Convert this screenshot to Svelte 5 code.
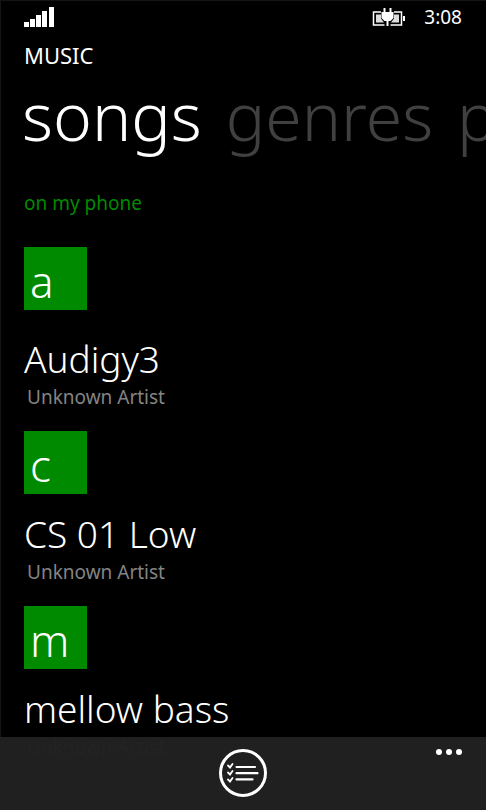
<script lang="ts">
  type Song = { title: string; artist: string };
  type Group = { letter: string; songs: Song[] };

  const pivots = ['songs', 'genres', 'playlists'];
  let active = $state('songs');

  const groups: Group[] = [
    { letter: 'a', songs: [{ title: 'Audigy3', artist: 'Unknown Artist' }] },
    { letter: 'c', songs: [{ title: 'CS 01 Low', artist: 'Unknown Artist' }] },
    { letter: 'm', songs: [{ title: 'mellow bass', artist: 'Unknown Artist' }] },
  ];
</script>

<div class="phone">
  <header class="status">
    <svg class="signal" width="30" height="20" viewBox="0 0 30 20" aria-label="Signal strength">
      <path fill="#fff" d="M0 15h5v5H0zM6 12h5v8H6zM12 8h5v12h-5zM18 4h5v16h-5zM25 0h5v20h-5z" />
    </svg>
    <svg class="battery" width="34" height="20" viewBox="0 0 34 20" aria-label="Charging">
      <path fill="none" stroke="#fff" stroke-width="1.5" d="M9 5H1.500v13h11M22 5h7.500v13h-11" />
      <path fill="#ddd" d="M4 7.500h5v4l3 4H4zM27 7.500h-5v4l-3 4h8z" />
      <path fill="#fff" d="M31 9h2v5h-2zM11.500 1h2v4h4V1h2v4h2v6l-3 3h-2v5h-2v-5h-2l-3-3V5h2z" />
    </svg>
    <time>3:08</time>
  </header>

  <h1>MUSIC</h1>

  <nav class="pivots">
    {#each pivots as pivot}
      <button class:active={pivot === active} onclick={() => (active = pivot)}>{pivot}</button>
    {/each}
  </nav>

  <main>
    <a class="filter" href="#phone">on my phone</a>

    {#each groups as group}
      <section>
        <button class="letter">{group.letter}</button>
        {#each group.songs as song}
          <div class="song">
            <h2>{song.title}</h2>
            <p>{song.artist}</p>
          </div>
        {/each}
      </section>
    {/each}
  </main>

  <footer class="appbar">
    <button class="select" aria-label="select">
      <svg width="48" height="48" viewBox="0 0 48 48" fill="none" stroke="#fff" stroke-linecap="round">
        <circle cx="24" cy="24" r="22.5" stroke-width="3" />
        <path stroke-width="2.2" d="M17.500 18h18.500M17.500 24.200h21M17.500 30.400h16" />
        <path stroke-width="1.8" d="M9 16.500l2 2 2.500-3.500M9 23.500l2 2 2.500-3.500M9 30.500l2 2 2.500-3.500" />
      </svg>
    </button>
    <button class="more" aria-label="more">
      <svg width="26" height="6" viewBox="0 0 26 6" fill="#fff">
        <circle cx="3" cy="3" r="3" />
        <circle cx="13" cy="3" r="3" />
        <circle cx="23" cy="3" r="3" />
      </svg>
    </button>
  </footer>
</div>

<style>
  :global(body) {
    margin: 0;
    background: #000;
  }

  .phone {
    box-sizing: border-box;
    height: 100vh;
    overflow: hidden;
    border-top: 1px solid #141414;
    border-left: 1px solid #141414;
    background: #000;
    color: #fff;
    font-family: "Noto Sans", "Open Sans", sans-serif;
    font-weight: 300;
  }

  button {
    padding: 0;
    border: 0;
    background: none;
    color: inherit;
    font: inherit;
    cursor: pointer;
  }

  svg {
    display: block;
  }

  .status {
    display: flex;
    align-items: center;
    height: 32px;
    padding: 0 24px 0 23px;
  }

  .battery {
    margin-left: auto;
  }

  time {
    margin-left: 18px;
    font-size: 19px;
    font-weight: 400;
  }

  h1 {
    margin: 8px 23px 0;
    font-size: 22px;
    line-height: 28px;
    font-weight: 400;
  }

  .pivots {
    display: flex;
    gap: 24px;
    padding-left: 21px;
    margin-top: 2px;
    overflow: hidden;
    font-size: 66px;
    line-height: 88px;
  }

  .pivots button {
    color: #404040;
  }

  .pivots .active {
    color: #fff;
  }

  main {
    padding: 30px 23px 0;
  }

  .filter {
    display: block;
    margin-bottom: 30px;
    color: #008a00;
    font-size: 19px;
    line-height: 28px;
    font-weight: 400;
    text-decoration: none;
  }

  section {
    margin-bottom: 22px;
  }

  .letter {
    display: block;
    width: 63px;
    height: 63px;
    padding: 6px 0 1px 6px;
    background: #008a00;
    font-size: 44px;
    line-height: 56px;
    text-align: left;
  }

  .song {
    margin-top: 14px;
  }

  section:first-of-type .song {
    margin-top: 23px;
  }

  h2 {
    margin: 0;
    font-size: 37px;
    line-height: 52px;
    font-weight: 300;
  }

  p {
    margin: 0 3px;
    color: #848484;
    font-size: 19px;
    line-height: 24px;
    font-weight: 400;
  }

  .appbar {
    position: fixed;
    right: 0;
    bottom: 0;
    left: 0;
    display: grid;
    grid-template-columns: 1fr auto 1fr;
    align-items: start;
    height: 61px;
    padding-top: 12px;
    background: rgba(33, 33, 33, 0.98);
  }

  .select {
    grid-column: 2;
  }

  .more {
    justify-self: end;
    margin-right: 24px;
  }
</style>
